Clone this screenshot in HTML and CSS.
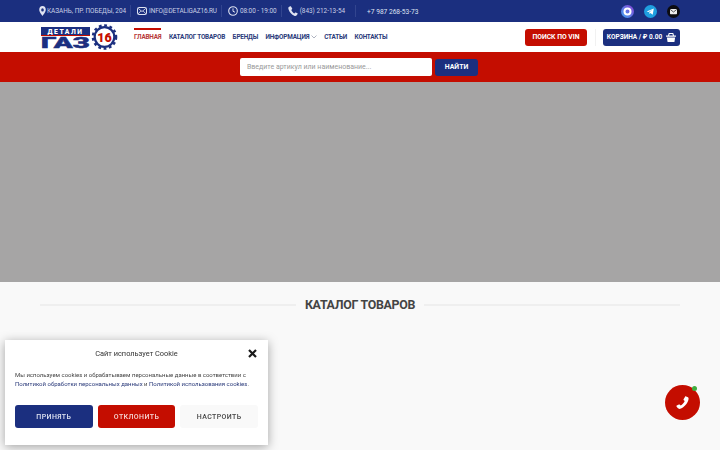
FILE: index.html
```html
<!doctype html>
<html lang="ru">
<head>
	<meta charset="utf-8">
	<meta name="viewport" content="width=device-width, initial-scale=1.0">
	<title>Детали ГАЗ 16</title>
	<link rel="stylesheet" href="styles.css">
</head>
<body>
	<div class="topbar">
		<div class="container topbar_inner">
			<ul class="top_list">
				<li>
					<svg class="ico" width="7" height="10" viewBox="0 0 9 11" preserveAspectRatio="none"><path fill="#dfe3f2" fill-rule="evenodd" d="M4.500 0A4.200 4.200 0 0 0 .3 4.200C.3 6.800 4.500 11 4.500 11s4.200-4.200 4.200-6.800A4.200 4.200 0 0 0 4.500 0zm0 2.600a1.700 1.700 0 1 1 0 3.400 1.700 1.700 0 0 1 0-3.400z"/></svg>
					<span>Казань, пр. Победы, 204</span>
				</li>
				<li>
					<svg class="ico" width="10" height="8" viewBox="0 0 10 8"><rect x=".5" y=".5" width="9" height="7" rx="1" fill="none" stroke="#dfe3f2"/><path d="M1 1.200 5 4.600l4-3.400M1 7l3-3.200M9 7 6 3.800" fill="none" stroke="#dfe3f2" stroke-width=".8"/></svg>
					<span>info@detaligaz16.ru</span>
				</li>
				<li>
					<svg class="ico" width="10" height="10" viewBox="0 0 10 10"><circle cx="5" cy="5" r="4.300" fill="none" stroke="#dfe3f2" stroke-width="1.100"/><path d="M5 2.400V5.300l2 .9" fill="none" stroke="#dfe3f2"/></svg>
					<span>08:00 - 19:00</span>
				</li>
				<li>
					<svg class="ico" width="10" height="10" viewBox="0 0 10 10"><path fill="#dfe3f2" d="M2.200.3.800 1C.2 1.400.2 2.400.6 3.500c.8 2.500 3.300 5.300 5.600 6.200 1.100.4 2 .2 2.500-.4l.9-1.200c.2-.3.1-.6-.2-.8L7.800 6.600c-.3-.2-.6-.1-.8.100l-.6.700c-1.200-.5-2.700-2.300-3.100-3.500l.7-.6c.2-.2.3-.5.200-.8L3 .5C2.900.2 2.500.1 2.200.3z"/></svg>
					<span>(843) 212-13-54</span>
				</li>
				<li class="plain">+7 987 268-53-73</li>
			</ul>
			<div class="socials">
				<span class="soc"><svg width="13" height="13" viewBox="0 0 13 13"><defs><linearGradient id="mx" x1="0" y1="1" x2="1" y2="0"><stop offset="0" stop-color="#3fa7f5"/><stop offset="1" stop-color="#8a3fd1"/></linearGradient></defs><circle cx="6.500" cy="6.500" r="6.500" fill="url(#mx)"/><circle cx="6.500" cy="6.500" r="3" fill="none" stroke="#fff" stroke-width="2"/></svg></span>
				<span class="soc"><svg width="13" height="13" viewBox="0 0 13 13"><circle cx="6.500" cy="6.500" r="6.500" fill="#1f9fe0"/><path d="M2.700 6.500 9.800 3.600 8.700 9.700 6.500 8.100 5.500 9.100 5.300 7.300 8.500 4.700 4.500 7.100z" fill="#fff"/></svg></span>
				<span class="soc"><svg width="13" height="13" viewBox="0 0 13 13"><circle cx="6.500" cy="6.500" r="6.500" fill="#0c0c10"/><rect x="3" y="4" width="7" height="5.200" rx=".7" fill="#eee"/><path d="M3.300 4.500 6.500 7l3.200-2.500" fill="none" stroke="#333" stroke-width=".8"/></svg></span>
			</div>
		</div>
	</div>

	<div class="header">
		<div class="container header_inner">
			<a class="logo" href="#">
				<svg width="78" height="30" viewBox="0 0 78 30">
					<rect x="0" y="5" width="49" height="8" fill="#1b2f7f"/>
					<text x="24.500" y="11.600" class="logo_small" text-anchor="middle">ДЕТАЛИ</text>
					<rect x="0" y="13" width="49" height="1" fill="#c40d00"/>
					<text x="24.500" y="26" class="logo_big" text-anchor="middle" textLength="49" lengthAdjust="spacingAndGlyphs">ГАЗ</text>
					<circle cx="63.500" cy="15" r="9.800" fill="#fff" stroke="#1b2f7f" stroke-width="2.200"/>
					<circle cx="63.500" cy="15" r="11.600" fill="none" stroke="#1b2f7f" stroke-width="2.400" stroke-dasharray="2.800 2.600"/>
					<text x="63.500" y="19.600" class="logo_num" text-anchor="middle">16</text>
				</svg>
			</a>
			<ul class="nav">
				<li class="active">Главная</li>
				<li>Каталог товаров</li>
				<li>Бренды</li>
				<li>Информация <svg width="6" height="4" viewBox="0 0 6 4"><path d="M.5.500 3 3 5.500.500" fill="none" stroke="#9aa0b0" stroke-width=".8"/></svg></li>
				<li>Статьи</li>
				<li>Контакты</li>
			</ul>
			<a class="btn btn_vin" href="#">Поиск по VIN</a>
			<span class="divider"></span>
			<a class="btn btn_cart" href="#">
				<span>Корзина / ₽ 0.00</span>
				<svg width="10" height="9" viewBox="0 0 11 10"><path fill="#fff" d="M3 0h5l.8 2.800H11v1.400H0V2.800h2.200zm.900 1L3.400 2.800h4.200L7.100 1zM.9 5h9.200L9.300 10H1.700z"/></svg>
			</a>
		</div>
	</div>

	<div class="searchbar">
		<input class="search_input" type="text" placeholder="Введите артикул или наименование...">
		<a class="btn btn_find" href="#">Найти</a>
	</div>

	<div class="hero"></div>

	<div class="content">
		<div class="container section_title">
			<span class="line"></span>
			<h2>Каталог товаров</h2>
			<span class="line"></span>
		</div>
	</div>

	<div class="cookie">
		<div class="cookie_head">
			<span>Сайт использует Cookie</span>
			<svg class="cookie_close" width="9" height="9" viewBox="0 0 9 9"><path d="M1 1l7 7M8 1 1 8" stroke="#1a1a1a" stroke-width="2.200" fill="none"/></svg>
		</div>
		<p class="cookie_text">Мы используем cookies и обрабатываем персональные данные в соответствии с<br><a href="#">Политикой обработки персональных данных</a> и <a href="#">Политикой использования cookies</a>.</p>
		<div class="cookie_btns">
			<a class="cbtn cbtn_accept" href="#">Принять</a>
			<a class="cbtn cbtn_deny" href="#">Отклонить</a>
			<a class="cbtn cbtn_set" href="#">Настроить</a>
		</div>
	</div>

	<a class="callback" href="#">
		<svg width="13" height="13" viewBox="0 0 10 10"><path fill="#fff" d="M7.800.3 9.200 1c.6.400.6 1.400.2 2.500-.8 2.500-3.300 5.300-5.600 6.200-1.100.4-2 .2-2.500-.4L.4 8.100c-.2-.3-.1-.6.2-.8l1.600-.7c.3-.2.6-.1.8.100l.6.700c1.200-.5 2.700-2.300 3.100-3.500l-.7-.6c-.2-.2-.3-.5-.2-.8L7 .5c.1-.3.500-.4.800-.2z"/></svg>
		<span class="callback_dot"></span>
	</a>
</body>
</html>
```

FILE: styles.css
```css
html, body {
	margin: 0;
	padding: 0;
}
body {
	font: 12px/1.4 Roboto, "Noto Sans", Arial, sans-serif;
	background: #f9f9f9;
	height: 450px;
	overflow: hidden;
}
a {
	color: inherit;
	text-decoration: none;
}
ul {
	list-style: none;
	margin: 0;
	padding: 0;
}
.container {
	width: 640px;
	margin: 0 auto;
}

/* top bar */
.topbar {
	height: 22px;
	background: #1b2f7f;
	color: #c9cfe6;
	font-size: 6.400px;
}
.topbar_inner {
	height: 22px;
	display: flex;
	align-items: center;
	justify-content: space-between;
}
.top_list {
	display: flex;
	align-items: center;
	margin-left: -1px;
}
.top_list li {
	display: flex;
	align-items: center;
	gap: 2px;
	text-transform: uppercase;
	padding-right: 4px;
	margin-right: 6px;
	border-right: 1px solid #32458f;
	height: 12px;
	white-space: nowrap;
}
.top_list li span {
	padding-top: 1px;
}
.top_list li:nth-child(1) {
	gap: 1px;
}
.top_list li:nth-child(2) {
	letter-spacing: -.12px;
}
.top_list li:nth-child(4) {
	padding-right: 10px;
}
.top_list li.plain {
	border: 0;
	margin-left: 5px;
	padding-top: 3px;
	font-size: 6.600px;
	color: #dfe3f2;
}
.socials {
	display: flex;
	gap: 10px;
}
.soc {
	display: block;
	width: 13px;
	height: 13px;
}

/* header */
.header {
	height: 30px;
	background: #fff;
}
.header_inner {
	height: 30px;
	display: flex;
	align-items: center;
}
.logo {
	display: block;
	width: 78px;
	height: 30px;
	margin-left: 1px;
	margin-right: 15px;
}
.logo_small {
	font: 900 6.800px Roboto, sans-serif;
	fill: #fff;
	letter-spacing: 1.500px;
}
.logo_big {
	font: 900 15.500px Roboto, sans-serif;
	fill: #1b2f7f;
	stroke: #1b2f7f;
	stroke-width: .5px;
}
.logo_num {
	font: 900 12.500px Roboto, sans-serif;
	fill: #c40d00;
}
.nav {
	display: flex;
	flex: 1;
	gap: 7.500px;
	height: 30px;
	align-items: center;
}
.nav li {
	position: relative;
	font-size: 6.400px;
	font-weight: 700;
	letter-spacing: -.2px;
	text-transform: uppercase;
	color: #2a3a7a;
	white-space: nowrap;
	line-height: 31px;
	height: 30px;
}
.nav li.active {
	color: #b83a3a;
}
.nav li.active::before {
	content: "";
	position: absolute;
	left: 0;
	right: 0;
	top: 6px;
	height: 2px;
	background: #c40d00;
}
.btn {
	display: flex;
	align-items: center;
	justify-content: center;
	font-size: 6.800px;
	font-weight: 700;
	text-transform: uppercase;
	color: #fff;
	border-radius: 3px;
	box-sizing: border-box;
	white-space: nowrap;
}
.btn_vin {
	width: 62px;
	height: 17px;
	padding-top: 2px;
	background: #c40d00;
}
.divider {
	width: 1px;
	height: 17px;
	background: #f1f1f1;
	margin: 0 7.500px;
}
.btn_cart {
	width: 77px;
	height: 17px;
	background: #1b2f7f;
	gap: 4px;
	font-size: 6.500px;
}
.btn_cart span {
	padding-top: 2px;
}

/* search */
.searchbar {
	height: 30px;
	background: #c40d00;
	display: flex;
	align-items: center;
	justify-content: center;
	gap: 3px;
	padding-right: 2px;
}
.search_input {
	width: 192px;
	height: 18px;
	box-sizing: border-box;
	border: 0;
	border-radius: 2px;
	background: #fff;
	padding: 0 7px;
	font: 7px Roboto, sans-serif;
	color: #555;
	outline: 0;
}
.search_input::placeholder {
	color: #999;
}
.btn_find {
	width: 43px;
	height: 17px;
	padding-top: 1px;
	background: #1b2f7f;
	font-size: 6.900px;
}

.hero {
	height: 200px;
	background: #a6a5a5;
}

/* section title */
.section_title {
	display: flex;
	align-items: center;
	gap: 9px;
	height: 46px;
}
.section_title h2 {
	margin: 0;
	font-size: 12.400px;
	font-weight: 700;
	letter-spacing: -.3px;
	text-transform: uppercase;
	color: #444;
	white-space: nowrap;
}
.line {
	flex: 1;
	height: 2px;
	background: #efefef;
}

/* cookie dialog */
.cookie {
	position: fixed;
	left: 5px;
	bottom: 5px;
	width: 263px;
	height: 105px;
	box-sizing: border-box;
	padding: 0 10px;
	background: #fff;
	box-shadow: 0 2px 10px rgba(0, 0, 0, 0.35);
	color: #333;
}
.cookie_head {
	display: flex;
	align-items: center;
	justify-content: center;
	height: 28px;
	font-size: 7.400px;
	position: relative;
}
.cookie_close {
	position: absolute;
	right: 1px;
	top: 9px;
}
.cookie_text {
	margin: 2px 0 0;
	font-size: 6px;
	line-height: 9px;
	color: #444;
	white-space: nowrap;
}
.cookie_text a {
	color: #2a3a7a;
}
.cookie_btns {
	display: flex;
	gap: 5px;
	margin-top: 17px;
}
.cbtn {
	flex: 1;
	height: 23px;
	line-height: 24px;
	text-align: center;
	border-radius: 3px;
	font-size: 7px;
	font-weight: 500;
	letter-spacing: .4px;
	text-transform: uppercase;
}
.cbtn_accept {
	background: #1b2f7f;
	color: #dfe3f2;
}
.cbtn_deny {
	background: #c40d00;
	color: #f6d5d2;
}
.cbtn_set {
	background: #f9f9f9;
	color: #444;
}

/* phone button */
.callback {
	position: fixed;
	left: 665px;
	top: 385px;
	width: 35px;
	height: 35px;
	border-radius: 50%;
	background: #c40d00;
	display: flex;
	align-items: center;
	justify-content: center;
}
.callback_dot {
	position: absolute;
	right: 3px;
	top: 1px;
	width: 5px;
	height: 5px;
	border-radius: 50%;
	background: #3fae3f;
}
```
